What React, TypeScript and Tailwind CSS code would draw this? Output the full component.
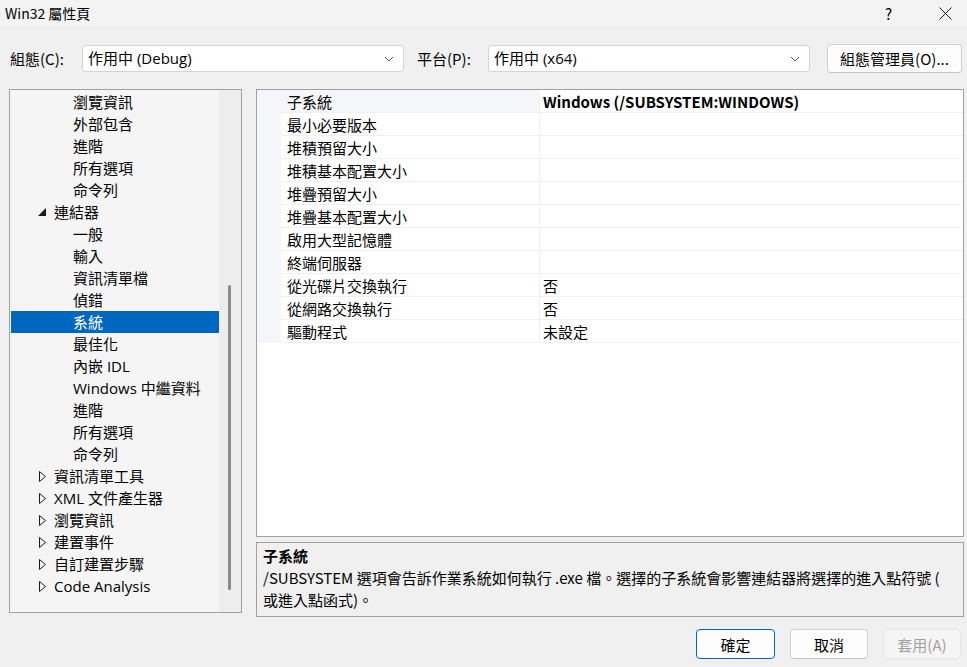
import React from "react";

const CJK = '"Noto Sans CJK TC", "Noto Sans", sans-serif';
const UI = '"Open Sans", "Noto Sans CJK TC", sans-serif';

type TreeItem = { label: string; level: 0 | 1; arrow?: "open" | "closed"; selected?: boolean };

const tree: TreeItem[] = [
  { label: "瀏覽資訊", level: 1 },
  { label: "外部包含", level: 1 },
  { label: "進階", level: 1 },
  { label: "所有選項", level: 1 },
  { label: "命令列", level: 1 },
  { label: "連結器", level: 0, arrow: "open" },
  { label: "一般", level: 1 },
  { label: "輸入", level: 1 },
  { label: "資訊清單檔", level: 1 },
  { label: "偵錯", level: 1 },
  { label: "系統", level: 1, selected: true },
  { label: "最佳化", level: 1 },
  { label: "內嵌 IDL", level: 1 },
  { label: "Windows 中繼資料", level: 1 },
  { label: "進階", level: 1 },
  { label: "所有選項", level: 1 },
  { label: "命令列", level: 1 },
  { label: "資訊清單工具", level: 0, arrow: "closed" },
  { label: "XML 文件產生器", level: 0, arrow: "closed" },
  { label: "瀏覽資訊", level: 0, arrow: "closed" },
  { label: "建置事件", level: 0, arrow: "closed" },
  { label: "自訂建置步驟", level: 0, arrow: "closed" },
  { label: "Code Analysis", level: 0, arrow: "closed" },
];

const props: [string, string][] = [
  ["子系統", "Windows (/SUBSYSTEM:WINDOWS)"],
  ["最小必要版本", ""],
  ["堆積預留大小", ""],
  ["堆積基本配置大小", ""],
  ["堆疊預留大小", ""],
  ["堆疊基本配置大小", ""],
  ["啟用大型記憶體", ""],
  ["終端伺服器", ""],
  ["從光碟片交換執行", "否"],
  ["從網路交換執行", "否"],
  ["驅動程式", "未設定"],
];

function Chevron() {
  return (
    <svg width="10" height="6" viewBox="0 0 10 6" className="shrink-0">
      <path d="M1 1 L5 5 L9 1" fill="none" stroke="#606060" strokeWidth="1" />
    </svg>
  );
}

function Combo({ text }: { text: string }) {
  return (
    <div className="w-[322px] h-[27px] bg-white border border-[#d4d4d4] rounded-[3px] flex items-center pl-[5px] pr-[9px]">
      <span className="flex-1 text-[15px] text-black leading-none" style={{ fontFamily: UI }}>
        {text}
      </span>
      <Chevron />
    </div>
  );
}

export default function App() {
  return (
    <div
      className="w-[967px] h-[667px] bg-[#f0f0f0] flex flex-col overflow-hidden text-black"
      style={{ fontFamily: CJK }}
    >
      {/* Title bar */}
      <div className="h-[26px] flex items-center pl-[5px] bg-[#f3f3f3]">
        <span className="text-[14px] leading-none">Win32 屬性頁</span>
        <div className="ml-auto flex items-center">
          <span className="text-[15px] leading-none mr-[47px]">?</span>
          <svg width="13" height="13" viewBox="0 0 13 13" className="mr-[15px]">
            <path d="M0.5 0.5 L12.5 12.5 M12.5 0.5 L0.5 12.5" stroke="#1a1a1a" strokeWidth="1" />
          </svg>
        </div>
      </div>

      {/* Toolbar */}
      <div className="mt-[18px] h-[29px] flex items-center pl-[10px]">
        <span className="w-[72px] text-[15px] leading-none">組態(C):</span>
        <Combo text="作用中 (Debug)" />
        <span className="ml-[13px] w-[71px] text-[15px] leading-none">平台(P):</span>
        <Combo text="作用中 (x64)" />
        <div className="ml-[17px] w-[135px] h-[29px] bg-[#fdfdfd] border border-[#d0d0d0] border-b-[#c4c4c4] rounded-[4px] flex items-center justify-center text-[15px] leading-none">
          組態管理員(O)...
        </div>
      </div>

      {/* Main */}
      <div className="mt-[16px] flex items-start pl-[9px]">
        {/* Tree */}
        <div className="w-[233px] h-[524px] border border-[#a0a0a0] flex">
          <div className="w-[209px] bg-[#f5f5f5] pt-[1px]" style={{ fontFamily: UI }}>
            {tree.map((t, i) => (
              <div
                key={i}
                className={
                  "h-[22px] flex items-center text-[15px] leading-none " +
                  (t.selected ? "ml-[1px] bg-[#0067c0] text-white" : "")
                }
              >
                {t.level === 1 ? (
                  <span className={t.selected ? "pl-[62px]" : "pl-[63px]"}>{t.label}</span>
                ) : (
                  <>
                    <span className="w-[44px] flex items-center shrink-0">
                      {t.arrow === "open" ? (
                        <svg width="8" height="8" viewBox="0 0 8 8" className="ml-[28px]">
                          <polygon points="8,0 8,8 0,8" fill="#1a1a1a" />
                        </svg>
                      ) : (
                        <svg width="8" height="11" viewBox="0 0 8 11" className="ml-[29px]">
                          <polygon points="0.5,0.5 6.5,5.5 0.5,10.5" fill="none" stroke="#1a1a1a" strokeWidth="1" />
                        </svg>
                      )}
                    </span>
                    <span>{t.label}</span>
                  </>
                )}
              </div>
            ))}
          </div>
          <div className="w-[22px] bg-[#ededed] relative">
            <div className="absolute left-[9px] top-[195px] w-[3px] h-[305px] rounded-full bg-[#8a8a8a]" />
          </div>
        </div>

        {/* Right column */}
        <div className="ml-[14px] w-[708px] flex flex-col">
          <div className="h-[448px] border border-[#a0a0a0] bg-white">
            {props.map(([name, val], i) => (
              <div key={i} className="h-[23px] flex">
                <div className="w-[24px] bg-[#f4f6f9]" />
                <div
                  className={
                    "w-[259px] border-b border-r border-[#f0f0f0] flex items-center pl-[6px] text-[15px] leading-none " +
                    (i === 0 ? "bg-[#f4f6f9]" : "")
                  }
                >
                  {name}
                </div>
                <div
                  className={
                    "flex-1 border-b border-[#f0f0f0] flex items-center pl-[3px] text-[15px] leading-none " +
                    (i === 0 ? "font-bold" : "")
                  }
                >
                  {val}
                </div>
              </div>
            ))}
          </div>
          <div className="mt-[5px] h-[75px] border border-[#a0a0a0] bg-[#f0f0f0] pl-[6px] pt-[2px] text-[15px] leading-[22px]">
            <div className="font-bold">子系統</div>
            <div>/SUBSYSTEM 選項會告訴作業系統如何執行 .exe 檔。選擇的子系統會影響連結器將選擇的進入點符號 (</div>
            <div>或進入點函式)。</div>
          </div>
        </div>
      </div>

      {/* Buttons */}
      <div className="mt-[12px] flex justify-end gap-[15px] pr-[6px]">
        <div className="w-[79px] h-[30px] bg-[#fdfdfd] border border-[#0067c0] rounded-[4px] flex items-center justify-center text-[15px] leading-none">
          確定
        </div>
        <div className="w-[78px] h-[30px] bg-[#fdfdfd] border border-[#d0d0d0] border-b-[#c4c4c4] rounded-[4px] flex items-center justify-center text-[15px] leading-none">
          取消
        </div>
        <div className="w-[78px] h-[30px] bg-[#f5f5f5] border border-[#e5e5e5] rounded-[4px] flex items-center justify-center text-[15px] leading-none text-[#a0a0a0]">
          套用(A)
        </div>
      </div>
    </div>
  );
}
